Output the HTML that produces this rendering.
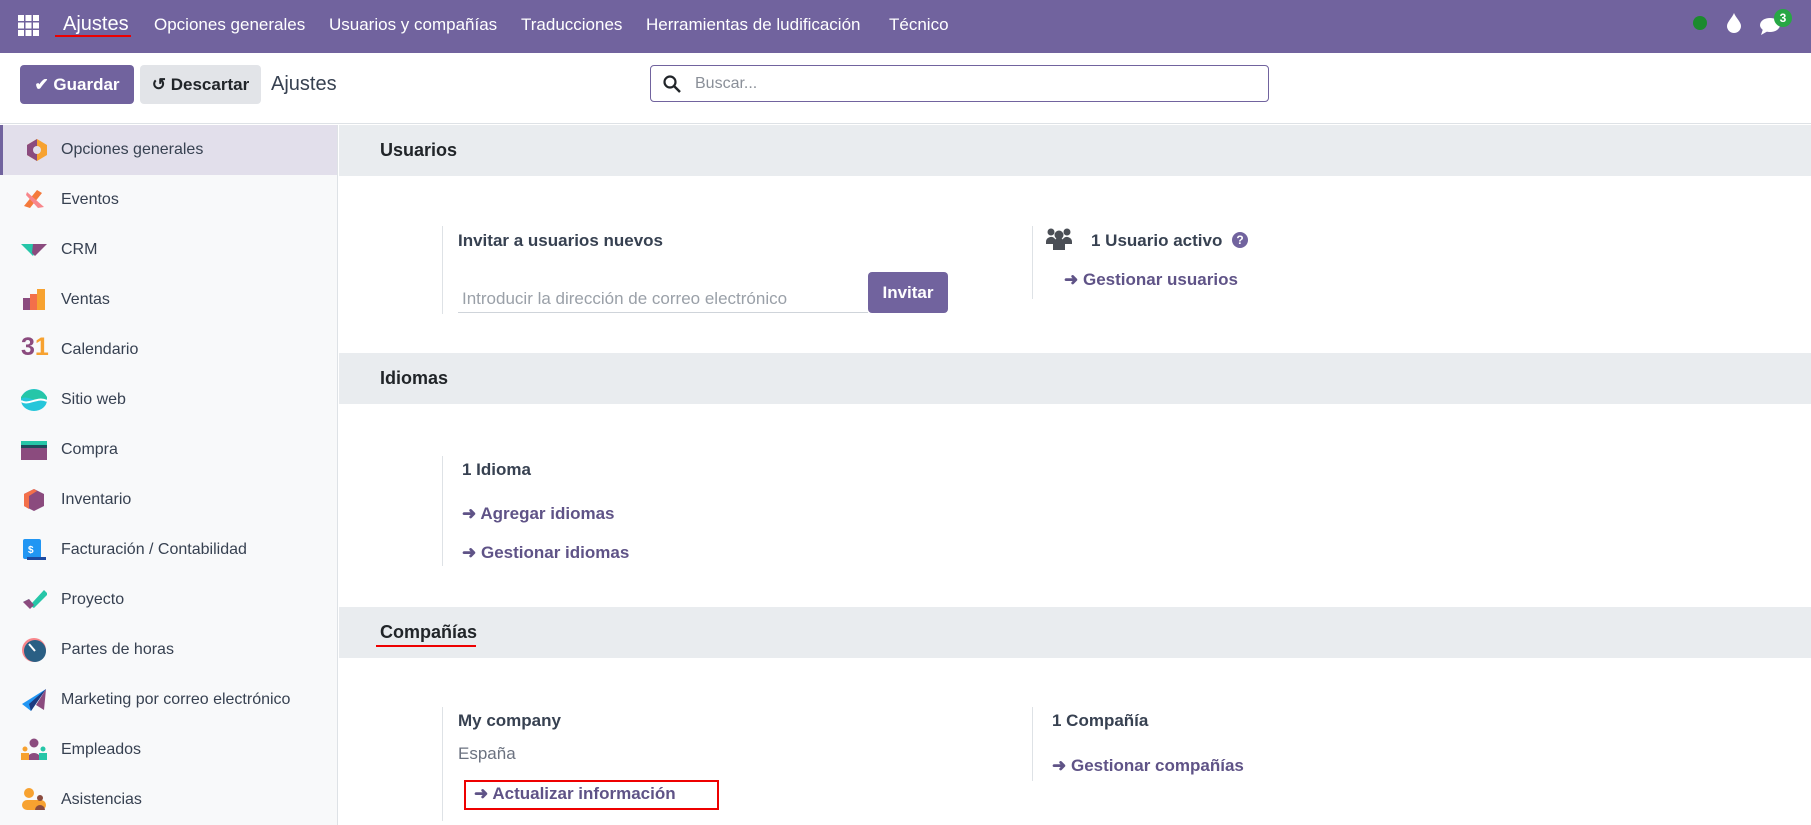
<!DOCTYPE html>
<html><head><meta charset="utf-8"><style>
*{box-sizing:border-box;margin:0;padding:0}
body{width:1811px;height:821px;overflow:hidden;font-family:"Liberation Sans",sans-serif;color:#374151;background:#fff;position:relative}
.abs{position:absolute}
.nav{left:0;top:0;width:1811px;height:53px;background:#71639e}
.nav span{position:absolute;top:15px;color:#fff;font-size:17px}
.cp{top:53px;left:0;width:1811px;height:71px;border-bottom:1px solid #dee2e6}
.btn{position:absolute;top:12px;height:39px;border-radius:4px;font-size:17px;font-weight:bold;line-height:39px;text-align:center}
.side{left:0;top:125px;width:338px;height:700px;background:#f8f9fa;border-right:1px solid #dee2e6}
.item{position:absolute;left:0;width:337px;height:50px}
.item .t{position:absolute;left:61px;top:16px;font-size:16px;color:#374151}
.item .i{position:absolute;left:21px;top:13px;width:26px;height:24px}
.hdr{position:absolute;left:339px;width:1472px;height:51px;background:#e9ecef}
.hdr span{position:absolute;left:41px;top:15px;font-size:18px;font-weight:bold;color:#212529}
.bl{position:absolute;border-left:1px solid #dee2e6}
.tx{position:absolute;font-size:17px;white-space:nowrap}
.lk{position:absolute;font-size:17px;color:#5f5387;font-weight:bold;white-space:nowrap}
</style></head><body>
<div class="abs nav">
 <svg class="abs" style="left:18px;top:15px" width="21" height="21" viewBox="0 0 21 21" fill="#fff"><rect x="0" y="0" width="6" height="6"/><rect x="7.5" y="0" width="6" height="6"/><rect x="15" y="0" width="6" height="6"/><rect x="0" y="7.5" width="6" height="6"/><rect x="7.5" y="7.5" width="6" height="6"/><rect x="15" y="7.5" width="6" height="6"/><rect x="0" y="15" width="6" height="6"/><rect x="7.5" y="15" width="6" height="6"/><rect x="15" y="15" width="6" height="6"/></svg>
 <span style="left:63px;top:13px;font-size:20px">Ajustes</span>
 <div class="abs" style="left:55px;top:35px;width:76px;height:2px;background:#e00"></div>
 <span style="left:154px">Opciones generales</span>
 <span style="left:329px">Usuarios y compañías</span>
 <span style="left:521px">Traducciones</span>
 <span style="left:646px">Herramientas de ludificación</span>
 <span style="left:889px">Técnico</span>
 <div class="abs" style="left:1693px;top:16px;width:14px;height:14px;border-radius:50%;background:#1b8a2e"></div>
 <svg class="abs" style="left:1727px;top:13px" width="14" height="20" viewBox="0 0 14 20"><path d="M7 0C5 5 0 9 0 13a7 7 0 0 0 14 0C14 9 9 5 7 0z" fill="#fff"/></svg>
 <svg class="abs" style="left:1760px;top:16px" width="24" height="20" viewBox="0 0 24 20"><ellipse cx="10" cy="9" rx="10" ry="7" fill="#fff"/><path d="M3 13l-2 6 7-4z" fill="#fff"/></svg>
 <div class="abs" style="left:1774px;top:9px;width:18px;height:18px;border-radius:50%;background:#28a745;color:#fff;font-size:12px;font-weight:bold;text-align:center;line-height:18px">3</div>
</div>
<div class="abs cp">
 <div class="btn" style="left:20px;width:114px;background:#71639e;color:#fff">✔ Guardar</div>
 <div class="btn" style="left:140px;width:121px;background:#e2e4e8;color:#212529">↺ Descartar</div>
 <div class="abs" style="left:271px;top:20px;font-size:20px;color:#374151">Ajustes</div>
 <div class="abs" style="left:650px;top:12px;width:619px;height:37px;border:1px solid #71639e;border-radius:4px">
  <svg class="abs" style="left:12px;top:9px" width="18" height="18" viewBox="0 0 18 18"><circle cx="7" cy="7" r="5.5" fill="none" stroke="#212529" stroke-width="2.2"/><path d="M11 11l6 6" stroke="#212529" stroke-width="2.5"/></svg>
  <div class="abs" style="left:44px;top:9px;font-size:16px;color:#8a8f98">Buscar...</div>
 </div>
</div>
<div class="abs side">
 <div class="item" style="top:0;background:#e2dfeb;border-left:3px solid #71639e"><svg class="i" viewBox="0 0 26 24"><path d="M13 1l10 6v10l-10 6-10-6V7z" fill="#f7a230"/><path d="M13 1L3 7v10l10 6z" fill="#8b4b7e"/><circle cx="13" cy="12" r="4" fill="#e2dfeb"/></svg><span class="t" style="left:58px">Opciones generales</span></div>
 <div class="item" style="top:50px"><svg class="i" viewBox="0 0 26 24"><path d="M3 18L16 2l5 3-12 15z" fill="#f47a3b"/><path d="M6 4l17 15-6 1L5 7z" fill="#f8868b"/></svg><span class="t">Eventos</span></div>
 <div class="item" style="top:100px"><svg class="i" viewBox="0 0 26 24"><path d="M0 6h18l-6 12z" fill="#26c6a8"/><path d="M12 6h14l-12 12-3-3z" fill="#8b4b7e"/></svg><span class="t">CRM</span></div>
 <div class="item" style="top:150px"><svg class="i" viewBox="0 0 26 24"><rect x="2" y="10" width="8" height="12" fill="#8b4b7e"/><rect x="9" y="6" width="8" height="16" fill="#f3704a"/><rect x="16" y="1" width="8" height="21" fill="#f7a230"/></svg><span class="t">Ventas</span></div>
 <div class="item" style="top:200px"><span class="abs" style="left:21px;top:8px;font-size:25px;font-weight:bold;color:#8b4b7e">3<span style="color:#f7a230">1</span></span><span class="t">Calendario</span></div>
 <div class="item" style="top:250px"><svg class="i" viewBox="0 0 26 24"><ellipse cx="13" cy="12" rx="13" ry="11" fill="#26c6da"/><path d="M0 11c6-5 14 5 26 0v-2C20 -1 6 -1 0 9z" fill="#26c6a8"/><path d="M0 13c8 5 16-5 26 0" stroke="#fff" stroke-width="2" fill="none"/></svg><span class="t">Sitio web</span></div>
 <div class="item" style="top:300px"><svg class="i" viewBox="0 0 26 24"><rect x="0" y="3" width="28" height="4" fill="#26c6a8"/><rect x="0" y="7" width="28" height="3" fill="#1d4a5b"/><rect x="0" y="10" width="28" height="12" fill="#8b4b7e"/></svg><span class="t">Compra</span></div>
 <div class="item" style="top:350px"><svg class="i" viewBox="0 0 26 24"><path d="M13 1l10 5v12l-10 5-10-5V6z" fill="#8b4b7e"/><path d="M3 6l10-5 3 2-8 5v13l-5-3z" fill="#f3704a"/></svg><span class="t">Inventario</span></div>
 <div class="item" style="top:400px"><svg class="i" viewBox="0 0 26 24"><rect x="2" y="1" width="18" height="20" rx="2" fill="#2196f3"/><rect x="6" y="19" width="19" height="3" fill="#1d4aa0"/><text x="7" y="15" font-size="10" fill="#fff" font-weight="bold" font-family="Liberation Sans">$</text></svg><span class="t">Facturación / Contabilidad</span></div>
 <div class="item" style="top:450px"><svg class="i" viewBox="0 0 26 24"><path d="M2 14l6-3 3 4 12-13 4 4-14 14z" fill="#26c6a8"/><path d="M2 14l6-3 5 6-4 4z" fill="#8b4b7e"/></svg><span class="t">Proyecto</span></div>
 <div class="item" style="top:500px"><svg class="i" viewBox="0 0 26 24"><circle cx="13" cy="12" r="12" fill="#f8868b"/><circle cx="14" cy="13" r="11" fill="#2a5f84"/><path d="M8 6l6 7" stroke="#fff" stroke-width="2"/></svg><span class="t">Partes de horas</span></div>
 <div class="item" style="top:550px"><svg class="i" viewBox="0 0 26 24"><path d="M1 16L25 1 10 23z" fill="#2196f3"/><path d="M25 1l-2 21-8-5z" fill="#8b4b7e"/><path d="M25 1L10 23l-2-7z" fill="#1d3a80"/></svg><span class="t">Marketing por correo electrónico</span></div>
 <div class="item" style="top:600px"><svg class="i" viewBox="0 0 26 24"><circle cx="13" cy="5" r="4.5" fill="#8b4b7e"/><path d="M6 22a7 7 0 0 1 14 0z" fill="#8b4b7e"/><circle cx="4" cy="11" r="2.5" fill="#f7a230"/><rect x="0" y="15" width="8" height="7" fill="#f7a230"/><circle cx="22" cy="11" r="2.5" fill="#26c6a8"/><rect x="18" y="15" width="8" height="7" fill="#26c6a8"/></svg><span class="t">Empleados</span></div>
 <div class="item" style="top:650px"><svg class="i" viewBox="0 0 26 24"><circle cx="8" cy="5" r="5" fill="#f7a230"/><rect x="1" y="12" width="24" height="10" rx="5" fill="#f7a230"/><circle cx="19" cy="10" r="3" fill="#8b4b3e"/><path d="M14 22a5 5 0 0 1 10 0z" fill="#8b4b3e"/></svg><span class="t">Asistencias</span></div>
</div>

<div class="hdr" style="top:125px"><span>Usuarios</span></div>
<div class="bl" style="left:442px;top:226px;height:88px"></div>
<div class="tx" style="left:458px;top:231px;font-weight:bold;color:#374151">Invitar a usuarios nuevos</div>
<div class="abs" style="left:458px;top:312px;width:410px;height:1px;background:#cfd4da"></div>
<div class="tx" style="left:462px;top:289px;color:#9aa0a8">Introducir la dirección de correo electrónico</div>
<div class="abs" style="left:868px;top:272px;width:80px;height:41px;background:#71639e;border-radius:4px;color:#fff;font-weight:bold;font-size:17px;text-align:center;line-height:41px">Invitar</div>
<div class="bl" style="left:1032px;top:226px;height:73px"></div>
<svg class="abs" style="left:1046px;top:228px" width="26" height="22" viewBox="0 0 26 22" fill="#4b4f56"><circle cx="5" cy="4" r="3.5"/><circle cx="21" cy="4" r="3.5"/><circle cx="13" cy="7" r="4.5"/><path d="M0 14a5 5 0 0 1 9-3v5H0z"/><path d="M26 14a5 5 0 0 0-9-3v5h9z"/><path d="M7 22v-6a6 6 0 0 1 12 0v6z"/></svg>
<div class="tx" style="left:1091px;top:231px;font-weight:bold">1 Usuario activo</div>
<div class="abs" style="left:1232px;top:232px;width:16px;height:16px;border-radius:50%;background:#71639e;color:#fff;font-size:12px;font-weight:bold;text-align:center;line-height:16px">?</div>
<div class="lk" style="left:1064px;top:270px">➜ Gestionar usuarios</div>

<div class="hdr" style="top:353px"><span>Idiomas</span></div>
<div class="bl" style="left:442px;top:456px;height:110px"></div>
<div class="tx" style="left:462px;top:460px;font-weight:bold">1 Idioma</div>
<div class="lk" style="left:462px;top:504px">➜ Agregar idiomas</div>
<div class="lk" style="left:462px;top:543px">➜ Gestionar idiomas</div>

<div class="hdr" style="top:607px"><span>Compañías</span></div>
<div class="abs" style="left:376px;top:645px;width:100px;height:2px;background:#e00"></div>
<div class="bl" style="left:442px;top:707px;height:114px"></div>
<div class="tx" style="left:458px;top:711px;font-weight:bold">My company</div>
<div class="tx" style="left:458px;top:744px;color:#6b7280">España</div>
<div class="abs" style="left:464px;top:780px;width:255px;height:30px;border:2px solid #e00"></div>
<div class="lk" style="left:474px;top:784px">➜ Actualizar información</div>
<div class="bl" style="left:1032px;top:707px;height:74px"></div>
<div class="tx" style="left:1052px;top:711px;font-weight:bold">1 Compañía</div>
<div class="lk" style="left:1052px;top:756px">➜ Gestionar compañías</div>
</body></html>
